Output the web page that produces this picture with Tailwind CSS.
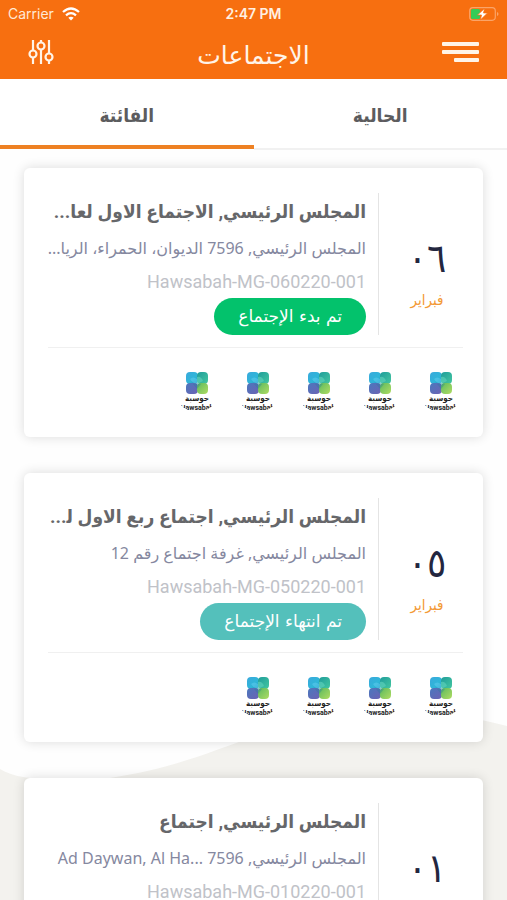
<!DOCTYPE html>
<html lang="ar" dir="rtl">
<head>
<meta charset="utf-8">
<meta name="viewport" content="width=device-width, initial-scale=1">
<title>الاجتماعات</title>
<script src="https://cdn.jsdelivr.net/npm/@tailwindcss/browser@4"></script>
</head>
<body class="h-screen flex flex-col overflow-hidden bg-[#fefefe] font-['Roboto','DejaVu_Sans_Condensed','DejaVu_Sans',sans-serif]">

<svg class="absolute size-0" aria-hidden="true">
  <defs>
    <linearGradient id="g1" x1="0" y1="0" x2="1" y2="1"><stop offset="0" stop-color="#3aa9dd"/><stop offset=".6" stop-color="#2fb6d8"/><stop offset="1" stop-color="#1d8fb5"/></linearGradient>
    <linearGradient id="g2" x1="0" y1="0" x2="1" y2="1"><stop offset="0" stop-color="#1f9d9b"/><stop offset="1" stop-color="#45c7a0"/></linearGradient>
    <linearGradient id="g3" x1="0" y1="0" x2="1" y2="1"><stop offset="0" stop-color="#4a78bd"/><stop offset="1" stop-color="#6d62b4"/></linearGradient>
    <linearGradient id="g4" x1="0" y1="0" x2="1" y2="1"><stop offset="0" stop-color="#5dba5f"/><stop offset="1" stop-color="#b0dc62"/></linearGradient>
    <clipPath id="disc"><circle cx="22" cy="22" r="22"/></clipPath>
  </defs>
  <symbol id="logo" viewBox="0 0 44 44">
    <g clip-path="url(#disc)">
      <rect x="11" y="4" width="12" height="12" rx="4" fill="url(#g1)"/>
      <rect x="22" y="4" width="11" height="12" rx="4" fill="url(#g2)"/>
      <rect x="11" y="15" width="12" height="11" rx="4" fill="url(#g3)"/>
      <rect x="22" y="15" width="11" height="11" rx="4" fill="url(#g4)"/>
      <path d="M15 11q3-3 7 0v4q-4 1-7-4z" fill="#5cc8ec" opacity=".6"/>
      <path d="M22 9q4-1 6 4l-6 3z" fill="#63d3bd" opacity=".6"/>
      <path d="M18 16l4-1 4 1-4 5z" fill="#247f9c" opacity=".35"/>
      <text x="22" y="33" text-anchor="middle" font-size="8" font-weight="700" fill="#222">حوسبة</text>
      <text x="22" y="42" text-anchor="middle" font-size="7" font-weight="700" fill="#222">Hawsabah</text>
    </g>
  </symbol>
</svg>

<header class="bg-[#f76f10] text-white shrink-0">
  <div dir="ltr" class="grid grid-cols-3 items-center h-7 pl-2 pr-2 text-[15px] leading-7 font-['Inter','Roboto',sans-serif]">
    <div class="flex items-center gap-2 text-[#ffe9d6]">
      <span class="text-[14px]">Carrier</span>
      <svg class="w-[18px] h-[14px]" viewBox="0 0 18 14" fill="none" stroke="#fff" stroke-width="2.3"><path d="M1 5Q9-2 17 5"/><path d="M4 8.3Q9 4 14 8.3"/><path d="M9 13.5L6.3 10.8Q9 8.7 11.7 10.8z" fill="#fff" stroke="none"/></svg>
    </div>
    <div class="text-center text-[14px] font-semibold text-[#fff0e2]">2:47 PM</div>
    <svg class="justify-self-end w-[30px] h-[14px]" viewBox="0 0 30 14"><rect x=".7" y=".7" width="25.6" height="12.6" rx="3.2" fill="none" stroke="#fba468" stroke-width="1.2"/><path d="M28 5v4q1.5-.7 1.5-2T28 5z" fill="#fba468"/><rect x="2" y="2" width="9" height="10" rx="1.5" fill="#35cc57"/><path d="M15.500 1.500L8.500 8h4l-1 4.800L18.500 6h-4z" fill="#fff" stroke="#f76f10" stroke-width=".7"/></svg>
  </div>
  <div class="flex items-center justify-between h-[51px] px-7 pb-1">
    <button type="button" aria-label="القائمة" class="block w-[37px]">
      <svg class="w-[37px] h-[22px]" viewBox="0 0 37 22" fill="#fff4e8"><rect y="1" width="37" height="4" rx="1"/><rect y="9" width="37" height="4" rx="1"/><rect x="12" y="17" width="25" height="4" rx="1"/></svg>
    </button>
    <h1 class="text-[25px] leading-8 pt-2 font-['DejaVu_Sans',sans-serif] text-[#fff4e8]">الاجتماعات</h1>
    <button type="button" aria-label="تصفية" class="flex w-[37px] justify-end">
      <svg class="w-[26px] h-[24px]" viewBox="0 0 26 24" fill="none" stroke="#fff4e8" stroke-width="2.2"><path d="M5 0v10M5 18v6M13 0v2M13 10v14M21 0v13M21 21v3"/><circle cx="5" cy="14" r="3.500"/><circle cx="13" cy="6" r="3.500"/><circle cx="21" cy="17" r="3.500"/></svg>
    </button>
  </div>
</header>

<nav class="grid grid-cols-2 h-[71px] shrink-0 bg-white text-[19px] font-bold text-[#5c5c5e]">
  <a href="#current" class="flex items-center justify-center border-b-2 border-[#f1f1f1] pt-1.5">الحالية</a>
  <a href="#past" aria-current="page" class="flex items-center justify-center border-b-4 border-[#ee8123] pt-2 mb-px">الفائتة</a>
</nav>

<main class="relative flex-1 min-h-0 overflow-hidden">
  <svg class="absolute inset-x-0 bottom-0 w-full h-[200px]" viewBox="0 0 507 200" preserveAspectRatio="none" fill="#f3f2ee" aria-hidden="true"><path d="M0 69C20 82 60 80 110 78C190 66 230 42 290 25C370 5 440 8 507 26V200H0z"/></svg>
  <div class="relative h-full overflow-y-auto [scrollbar-width:none] flex flex-col gap-9 px-6 pt-[18px] pb-9">

    <article class="shrink-0 bg-white rounded-md shadow-[0_0_12px_rgba(0,0,0,0.14)] pt-[25px] pb-[25px] pl-6 pr-5">
      <div class="flex gap-3">
        <time datetime="02-06" class="w-[72px] shrink-0 flex flex-col items-center pt-[43px] text-[#23263f]">
          <span class="text-[40px] leading-[46px]">٠٦</span><span class="text-[15px] leading-9 text-[#f39a35]">فبراير</span>
        </time>
        <div class="w-px bg-[#e4e4e4] shrink-0"></div>
        <div class="min-w-0 flex-1 whitespace-nowrap">
          <h2 class="text-[19px] leading-[38px] font-bold text-[#66676a]">المجلس الرئيسي, الاجتماع الاول لعا...</h2>
          <p class="text-[16px] leading-[34px] font-['Noto_Sans','DejaVu_Sans',sans-serif] text-[#8588a0]">المجلس الرئيسي, 7596 الديوان، الحمراء، الريا...</p>
          <p class="text-[18px] leading-[33px] text-[#c0c2c8]"><bdi>Hawsabah-MG-060220-001</bdi></p>
          <span class="block w-fit rounded-full bg-[#03c26c] px-6 text-[17px] leading-[37px] font-['DejaVu_Sans',sans-serif] text-white">تم بدء الإجتماع</span>
        </div>
      </div>
      <div class="mt-3 border-t border-[#f0f0f0] pt-5 flex gap-[17px]">
        <svg class="size-11" role="img" aria-label="حوسبة"><use href="#logo"/></svg>
        <svg class="size-11" role="img" aria-label="حوسبة"><use href="#logo"/></svg>
        <svg class="size-11" role="img" aria-label="حوسبة"><use href="#logo"/></svg>
        <svg class="size-11" role="img" aria-label="حوسبة"><use href="#logo"/></svg>
        <svg class="size-11" role="img" aria-label="حوسبة"><use href="#logo"/></svg>
      </div>
    </article>

    <article class="shrink-0 bg-white rounded-md shadow-[0_0_12px_rgba(0,0,0,0.14)] pt-[25px] pb-[25px] pl-6 pr-5">
      <div class="flex gap-3">
        <time datetime="02-05" class="w-[72px] shrink-0 flex flex-col items-center pt-[43px] text-[#23263f]">
          <span class="text-[40px] leading-[46px]">٠٥</span><span class="text-[15px] leading-9 text-[#f39a35]">فبراير</span>
        </time>
        <div class="w-px bg-[#e4e4e4] shrink-0"></div>
        <div class="min-w-0 flex-1 whitespace-nowrap">
          <h2 class="text-[19px] leading-[38px] font-bold text-[#66676a]">المجلس الرئيسي, اجتماع ربع الاول ل&zwj;...</h2>
          <p class="text-[16px] leading-[34px] font-['Noto_Sans','DejaVu_Sans',sans-serif] text-[#8588a0]">المجلس الرئيسي, غرفة اجتماع رقم 12</p>
          <p class="text-[18px] leading-[33px] text-[#c0c2c8]"><bdi>Hawsabah-MG-050220-001</bdi></p>
          <span class="block w-fit rounded-full bg-[#54c0bb] px-6 text-[17px] leading-[37px] font-['DejaVu_Sans',sans-serif] text-white">تم انتهاء الإجتماع</span>
        </div>
      </div>
      <div class="mt-3 border-t border-[#f0f0f0] pt-5 flex gap-[17px]">
        <svg class="size-11" role="img" aria-label="حوسبة"><use href="#logo"/></svg>
        <svg class="size-11" role="img" aria-label="حوسبة"><use href="#logo"/></svg>
        <svg class="size-11" role="img" aria-label="حوسبة"><use href="#logo"/></svg>
        <svg class="size-11" role="img" aria-label="حوسبة"><use href="#logo"/></svg>
      </div>
    </article>

    <article class="shrink-0 bg-white rounded-md shadow-[0_0_12px_rgba(0,0,0,0.14)] pt-[25px] pb-[25px] pl-6 pr-5">
      <div class="flex gap-3">
        <time datetime="02-01" class="w-[72px] shrink-0 flex flex-col items-center pt-[43px] text-[#23263f]">
          <span class="text-[40px] leading-[46px]">٠١</span><span class="text-[15px] leading-9 text-[#f39a35]">فبراير</span>
        </time>
        <div class="w-px bg-[#e4e4e4] shrink-0"></div>
        <div class="min-w-0 flex-1 whitespace-nowrap">
          <h2 class="text-[19px] leading-[38px] font-bold text-[#66676a]">المجلس الرئيسي, اجتماع</h2>
          <p class="text-[16px] leading-[34px] font-['Noto_Sans','DejaVu_Sans',sans-serif] text-[#8588a0]">المجلس الرئيسي, 7596 <bdi dir="ltr">Ad Daywan, Al Ha...</bdi></p>
          <p class="text-[18px] leading-[33px] text-[#c0c2c8]"><bdi>Hawsabah-MG-010220-001</bdi></p>
          <span class="block w-fit rounded-full bg-[#54c0bb] px-6 text-[17px] leading-[37px] font-['DejaVu_Sans',sans-serif] text-white">تم انتهاء الإجتماع</span>
        </div>
      </div>
    </article>
  </div>
</main>
</body>
</html>
